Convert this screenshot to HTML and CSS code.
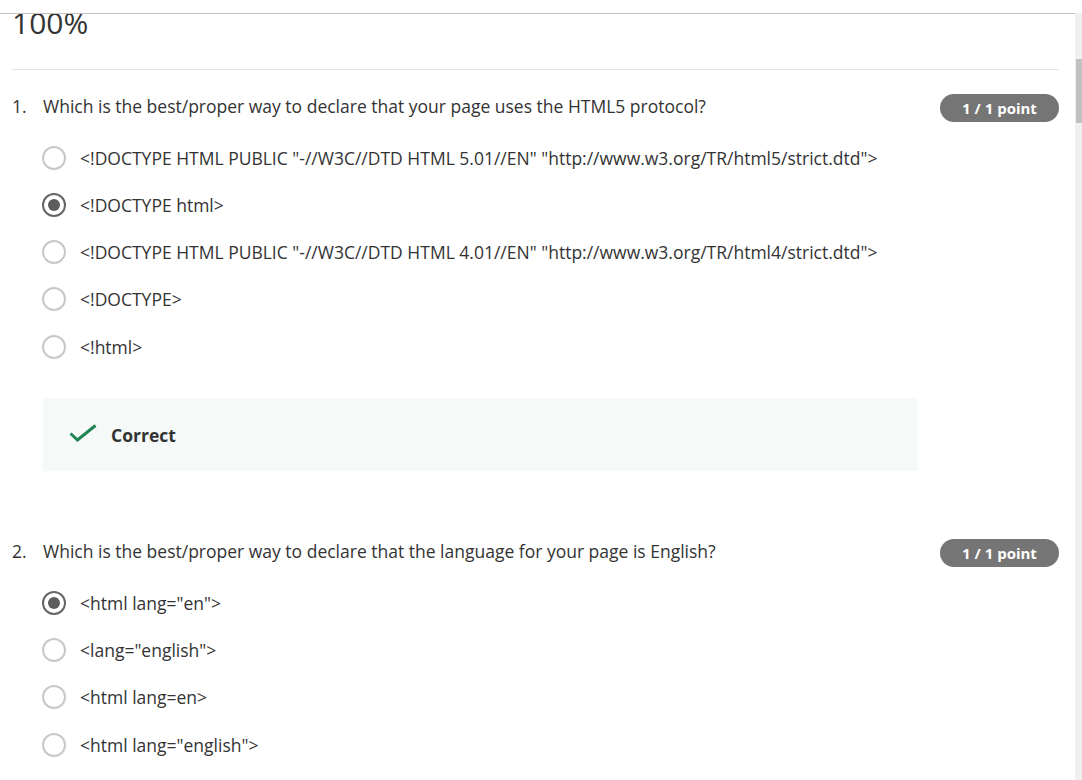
FILE: index.html
```html
<!DOCTYPE html>
<html lang="en">
<head>
<meta charset="utf-8">
<title>Quiz results</title>
<link rel="stylesheet" href="styles.css">
</head>
<body>
<div class="page">
  <div class="left">
    <div class="topbar"></div>
    <main class="main">
      <div class="grade">100%</div>
      <hr class="divider">

      <section class="question">
        <div class="q-head">
          <span class="q-num">1.</span>
          <span class="q-text">Which is the best/proper way to declare that your page uses the HTML5 protocol?</span>
          <span class="badge">1 / 1 point</span>
        </div>
        <ul class="options">
          <li class="option"><span class="radio"></span><span>&lt;!DOCTYPE HTML PUBLIC "-//W3C//DTD HTML 5.01//EN" "http://www.w3.org/TR/html5/strict.dtd"&gt;</span></li>
          <li class="option"><span class="radio checked"></span><span>&lt;!DOCTYPE html&gt;</span></li>
          <li class="option"><span class="radio"></span><span>&lt;!DOCTYPE HTML PUBLIC "-//W3C//DTD HTML 4.01//EN" "http://www.w3.org/TR/html4/strict.dtd"&gt;</span></li>
          <li class="option"><span class="radio"></span><span>&lt;!DOCTYPE&gt;</span></li>
          <li class="option"><span class="radio"></span><span>&lt;!html&gt;</span></li>
        </ul>
        <div class="feedback">
          <svg class="check" width="28" height="18" viewBox="0 0 28 18"><polyline points="1.5,9.5 8.5,16 26.5,1.5" fill="none" stroke="#1f8354" stroke-width="3"/></svg>
          <span class="feedback-text">Correct</span>
        </div>
      </section>

      <section class="question q2">
        <div class="q-head">
          <span class="q-num">2.</span>
          <span class="q-text">Which is the best/proper way to declare that the language for your page is English?</span>
          <span class="badge">1 / 1 point</span>
        </div>
        <ul class="options">
          <li class="option"><span class="radio checked"></span><span>&lt;html lang="en"&gt;</span></li>
          <li class="option"><span class="radio"></span><span>&lt;lang="english"&gt;</span></li>
          <li class="option"><span class="radio"></span><span>&lt;html lang=en&gt;</span></li>
          <li class="option"><span class="radio"></span><span>&lt;html lang="english"&gt;</span></li>
        </ul>
      </section>
    </main>
  </div>
  <div class="scrollbar"><div class="thumb"></div></div>
</div>
</body>
</html>
```

FILE: styles.css
```css
html, body {
  margin: 0;
  padding: 0;
  height: 780px;
  overflow: hidden;
  background: #fff;
}
body {
  font-family: "Open Sans", "Liberation Sans", sans-serif;
  color: #333;
}
.page {
  display: flex;
  height: 780px;
}
.left {
  flex: 1;
  display: flex;
  flex-direction: column;
  min-width: 0;
}
.topbar {
  height: 13px;
  border-bottom: 1px solid #c4c4c4;
  flex: none;
}
.main {
  flex: 1;
  overflow: hidden;
  padding: 0 16px 0 12px;
}
.grade {
  font-size: 30px;
  line-height: 30px;
  margin-top: -6px;
  color: #333;
}
.divider {
  border: 0;
  border-top: 1px solid #e3e3e3;
  margin: 31px 0 0 0;
  height: 0;
}
.question {
  margin-top: 24px;
}
.q2 {
  margin-top: 68px;
}
.q-head {
  display: flex;
  align-items: flex-start;
  font-size: 17.5px;
  line-height: 24px;
}
.q-num {
  width: 31px;
  flex: none;
}
.q-text {
  flex: 1;
}
.badge {
  flex: none;
  width: 119px;
  height: 28px;
  box-sizing: border-box;
  border-radius: 14px;
  background: #757575;
  color: #fff;
  font-weight: 700;
  font-size: 15px;
  line-height: 28px;
  text-align: center;
}
.options {
  list-style: none;
  margin: 12px 0 0 0;
  padding: 0;
}
.option {
  display: flex;
  align-items: center;
  height: 47.25px;
  padding-left: 30px;
  font-size: 17.5px;
  color: #333;
}
.radio {
  flex: none;
  width: 24px;
  height: 24px;
  box-sizing: border-box;
  border: 2px solid #c8c8c8;
  border-radius: 50%;
  margin-right: 14px;
  display: flex;
  align-items: center;
  justify-content: center;
}
.radio.checked {
  border: 2.5px solid #666;
}
.radio.checked::after {
  content: "";
  width: 12px;
  height: 12px;
  border-radius: 50%;
  background: #5c5c5c;
}
.feedback {
  margin: 28px 0 0 31px;
  width: 875px;
  height: 73px;
  background: #f5f9f8;
  display: flex;
  align-items: center;
  padding-left: 26px;
  box-sizing: border-box;
}
.check {
  flex: none;
  margin-right: 14px;
  margin-top: -4px;
}
.feedback-text {
  font-weight: 700;
  font-size: 17.5px;
  color: #333;
}
.scrollbar {
  flex: none;
  width: 7px;
  margin-top: 13px;
  background: #f0f0f0;
}
.thumb {
  margin: 46px 0 0 1px;
  width: 6px;
  height: 64px;
  background: #c1c1c1;
}
```
